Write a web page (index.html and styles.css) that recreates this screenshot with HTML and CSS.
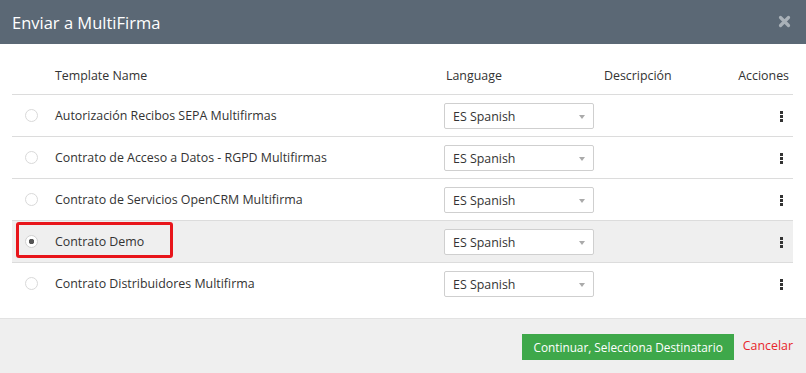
FILE: index.html
```html
<!DOCTYPE html>
<html lang="es">
<head>
  <meta charset="UTF-8">
  <meta name="viewport" content="width=device-width, initial-scale=1.0">
  <link rel="stylesheet" href="styles.css">
  <title>Enviar a MultiFirma</title>
</head>
<body>
  <div class="modal">
    <div class="modal-header">
      <h3>Enviar a MultiFirma</h3>
      <span class="close">
        <svg width="13" height="13" viewBox="0 0 13 13"><path d="M2.5 2.5L10.5 10.5M10.5 2.5L2.5 10.5" stroke="#a9b1b8" stroke-width="3.2" stroke-linecap="round"/></svg>
      </span>
    </div>

    <div class="modal-body">
      <table class="templates">
        <thead>
          <tr>
            <th class="col-radio"></th>
            <th class="col-name">Template Name</th>
            <th class="col-lang">Language</th>
            <th class="col-desc">Descripción</th>
            <th class="col-actions">Acciones</th>
          </tr>
        </thead>
        <tbody>
          <tr>
            <td><input type="radio" name="template"></td>
            <td>Autorización Recibos SEPA Multifirmas</td>
            <td><div class="select">ES Spanish<span class="caret"></span></div></td>
            <td></td>
            <td class="col-actions"><span class="dots"><i></i><i></i><i></i></span></td>
          </tr>
          <tr>
            <td><input type="radio" name="template"></td>
            <td>Contrato de Acceso a Datos - RGPD Multifirmas</td>
            <td><div class="select">ES Spanish<span class="caret"></span></div></td>
            <td></td>
            <td class="col-actions"><span class="dots"><i></i><i></i><i></i></span></td>
          </tr>
          <tr>
            <td><input type="radio" name="template"></td>
            <td>Contrato de Servicios OpenCRM Multifirma</td>
            <td><div class="select">ES Spanish<span class="caret"></span></div></td>
            <td></td>
            <td class="col-actions"><span class="dots"><i></i><i></i><i></i></span></td>
          </tr>
          <tr class="selected">
            <td><input type="radio" name="template" checked></td>
            <td>Contrato Demo</td>
            <td><div class="select">ES Spanish<span class="caret"></span></div></td>
            <td></td>
            <td class="col-actions"><span class="dots"><i></i><i></i><i></i></span></td>
          </tr>
          <tr>
            <td><input type="radio" name="template"></td>
            <td>Contrato Distribuidores Multifirma</td>
            <td><div class="select">ES Spanish<span class="caret"></span></div></td>
            <td></td>
            <td class="col-actions"><span class="dots"><i></i><i></i><i></i></span></td>
          </tr>
        </tbody>
      </table>
      <span class="mark"></span>
    </div>

    <div class="modal-footer">
      <button class="btn-continue">Continuar, Selecciona Destinatario</button>
      <a href="#" class="cancel">Cancelar</a>
    </div>
  </div>
</body>
</html>
```

FILE: styles.css
```css
body {
  margin: 0;
  font-family: 'Open Sans', sans-serif;
  font-size: 12.4px;
  color: #333;
  background-color: #fff;
}

.modal {
  width: 806px;
  height: 373px;
  display: flex;
  flex-direction: column;
}

.modal-header {
  height: 44px;
  background-color: #5b6875;
  display: flex;
  align-items: center;
  justify-content: space-between;
  padding: 0 15px 0 12px;
}

.modal-header h3 {
  margin: 0;
  font-family: 'Open Sans', sans-serif;
  font-weight: normal;
  font-size: 16.5px;
  color: #fff;
}

.close {
  display: flex;
  margin-top: -1px;
}

.modal-body {
  position: relative;
  padding: 12px 13px 14px 12px;
}

.templates {
  width: 781px;
  border-collapse: collapse;
  table-layout: fixed;
}

.templates th {
  height: 38px;
  font-weight: normal;
  text-align: left;
  padding: 0 4px;
  border-bottom: 1px solid #dcdcdc;
}

.templates td {
  height: 41px;
  padding: 0 4px;
  border-bottom: 1px solid #dcdcdc;
  vertical-align: middle;
}

.templates tbody tr:last-child td {
  border-bottom: none;
}

.templates th.col-lang {
  padding-left: 6px;
}

.col-radio { width: 31px; }
.col-name { width: 381px; }
.col-lang { width: 150px; }
.col-desc { width: 94px; }

.templates .col-actions {
  text-align: right;
  padding-right: 4px;
}

.templates td.col-actions {
  padding-right: 10px;
}

tr.selected td {
  background-color: #efefef;
}

input[type="radio"] {
  appearance: none;
  width: 13px;
  height: 13px;
  margin: 0 0 0 9px;
  border: 1px solid #d9d9d9;
  border-radius: 50%;
  background-color: #fff;
  display: block;
  box-sizing: border-box;
}

input[type="radio"]:checked {
  background: radial-gradient(circle, #555 0 2.5px, #fff 3px);
  border-color: #d0d0d0;
}

.select {
  position: relative;
  width: 150px;
  height: 26px;
  box-sizing: border-box;
  border: 1px solid #cfcfcf;
  border-radius: 2px;
  background-color: #fff;
  padding-left: 8px;
  line-height: 25px;
  font-size: 12.4px;
}

.caret {
  position: absolute;
  right: 8px;
  top: 11px;
  border-left: 3px solid transparent;
  border-right: 3px solid transparent;
  border-top: 4px solid #aaa;
}

.dots {
  display: inline-flex;
  flex-direction: column;
  gap: 1px;
  vertical-align: middle;
}

.dots i {
  width: 3px;
  height: 3px;
  background-color: #333;
}

.mark {
  position: absolute;
  left: 16px;
  top: 178px;
  width: 157px;
  height: 36px;
  box-sizing: border-box;
  border: 3px solid #e8151b;
  border-radius: 3px;
}

.modal-footer {
  flex: 1;
  background-color: #efefef;
  border-top: 1px solid #e2e2e2;
  display: flex;
  justify-content: flex-end;
  align-items: flex-start;
  padding: 15px 13px 0 0;
}

.btn-continue {
  height: 26px;
  padding: 0 11px;
  background-color: #3ea84a;
  border: none;
  border-radius: 0;
  color: #fff;
  font-family: 'Open Sans', sans-serif;
  font-size: 11.8px;
  cursor: pointer;
}

.cancel {
  margin-left: 9px;
  line-height: 24px;
  color: #e8262c;
  text-decoration: none;
}
```
